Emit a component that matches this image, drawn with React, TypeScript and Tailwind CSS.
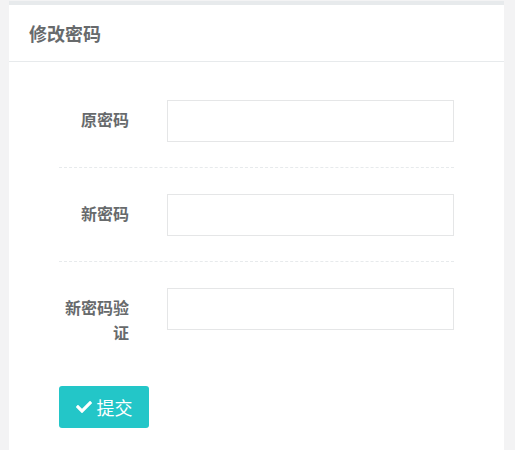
import { FaCheck } from 'react-icons/fa'

const fields = ['原密码', '新密码', '新密码验证']

function Field({ label }: { label: string }) {
  return (
    <div className="flex items-start">
      <label className="w-[70px] shrink-0 pt-[7px] text-right text-[16px] font-bold leading-[25px] text-[#676a6c]">
        {label}
      </label>
      <input
        type="password"
        className="ml-[38px] h-[42px] w-[287px] border border-[#e5e6e7] bg-white px-3 outline-none"
      />
    </div>
  )
}

export default function App() {
  return (
    <div
      className="h-[450px] overflow-hidden bg-[#f3f3f4] pt-px pl-[9px] pr-[11px]"
      style={{ fontFamily: '"Noto Sans CJK SC", "Noto Sans", sans-serif' }}
    >
      <div className="h-full border-t-4 border-[#e7eaec] bg-white">
        {/* Title */}
        <div className="flex h-[57px] items-center border-b border-[#e7eaec] px-[20px]">
          <h5 className="text-[18px] font-bold text-[#676a6c]">修改密码</h5>
        </div>

        {/* Form */}
        <div className="px-[50px] pt-[38px]">
          {fields.map((f, i) => (
            <div key={f}>
              <Field label={f} />
              {i < fields.length - 1 && (
                <div className="mt-[25px] mb-[26px] border-t border-dashed border-[#e7eaec]" />
              )}
            </div>
          ))}
          <button className="mt-[41px] flex h-[42px] w-[90px] items-center justify-center gap-[5px] rounded-[3px] bg-[#23c6c8] text-[18px] text-white">
            <FaCheck size={16} />
            提交
          </button>
        </div>
      </div>
    </div>
  )
}
